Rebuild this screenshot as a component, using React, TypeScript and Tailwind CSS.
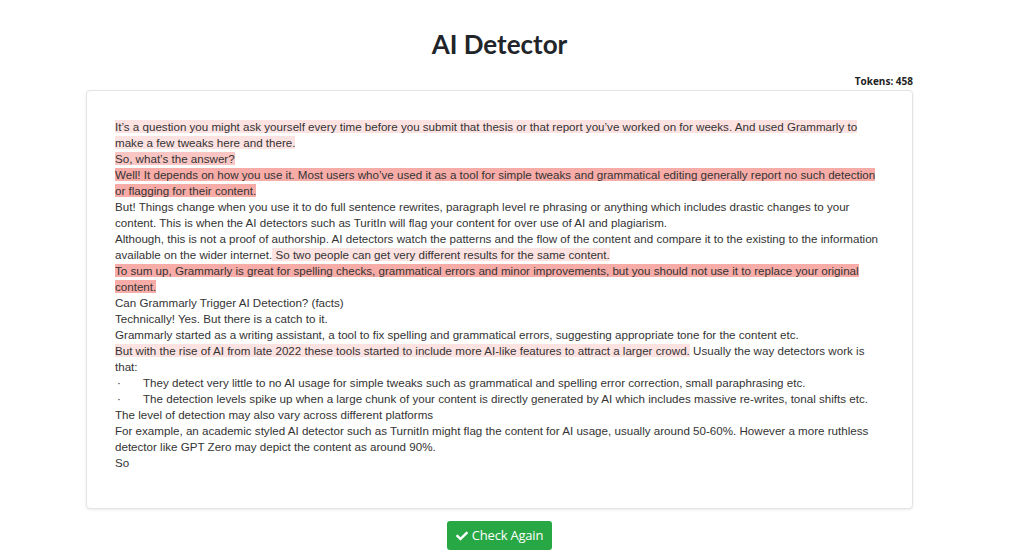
import { FaCheck } from "react-icons/fa";

type Seg = { text: string; tone?: "light" | "mid" | "strong" };

const toneClass = {
  light: "bg-[#fde2e2]",
  mid: "bg-[#fac6c4]",
  strong: "bg-[#f8aca8]",
};

const lines: Seg[][] = [
  [
    {
      text: "It’s a question you might ask yourself every time before you submit that thesis or that report you’ve worked on for weeks. And used Grammarly to make a few tweaks here ",
      tone: "light",
    },
    { text: "and there.", tone: "light" },
  ],
  [{ text: "So, what’s the answer?", tone: "mid" }],
  [
    {
      text: "Well! It depends on how you use it. Most users who’ve used it as a tool for simple tweaks and grammatical editing generally report no such detection or flagging for their content.",
      tone: "strong",
    },
  ],
  [
    {
      text: "But! Things change when you use it to do full sentence rewrites, paragraph level re phrasing or anything which includes drastic changes to your content. This is when the AI detectors such as TuritIn will flag your content for over use of AI and plagiarism.",
    },
  ],
  [
    {
      text: "Although, this is not a proof of authorship. AI detectors watch the patterns and the flow of the content and compare it to the existing to the information available on the wider internet.",
    },
    { text: " So two people can get very different results for the same content.", tone: "light" },
  ],
  [
    {
      text: "To sum up, Grammarly is great for spelling checks, grammatical errors and minor improvements, but you should not use it to replace your original content.",
      tone: "strong",
    },
  ],
  [{ text: "Can Grammarly Trigger AI Detection? (facts)" }],
  [{ text: "Technically! Yes. But there is a catch to it." }],
  [
    {
      text: "Grammarly started as a writing assistant, a tool to fix spelling and grammatical errors, suggesting appropriate tone for the content etc.",
    },
  ],
  [
    {
      text: "But with the rise of AI from late 2022 these tools started to include more AI-like features to attract a larger crowd.",
      tone: "light",
    },
    { text: " Usually the way detectors work is that:" },
  ],
];

const bullets = [
  "They detect very little to no AI usage for simple tweaks such as grammatical and spelling error correction, small paraphrasing etc.",
  "The detection levels spike up when a large chunk of your content is directly generated by AI which includes massive re-writes, tonal shifts etc.",
];

const tail = [
  "The level of detection may also vary across different platforms",
  "For example, an academic styled AI detector such as TurnitIn might flag the content for AI usage, usually around 50-60%. However a more ruthless detector like GPT Zero may depict the content as around 90%.",
  "So",
];

export default function App() {
  return (
    <div className="min-h-[560px] bg-white">
      <div className="w-[999px] flex flex-col items-center pt-[28px]">
        <h1 className="font-['Lato',sans-serif] font-bold text-[26px] leading-[32px] text-[#212529]">
          AI Detector
        </h1>

        <div className="w-[827px] mt-[14px] flex justify-end">
          <span className="font-['Open_Sans',sans-serif] font-bold text-[10px] leading-[14px] text-[#222]">
            Tokens: 458
          </span>
        </div>

        <div className="w-[827px] h-[419px] mt-[2px] border border-[#e4e4e4] rounded-[4px] bg-white shadow-[0_1px_3px_rgba(0,0,0,0.08)] pl-[28px] pr-[24px] pt-[28px]">
          <div className="font-['Liberation_Sans',Arial,sans-serif] text-[11.6px] leading-[16px] text-[#333]">
            {lines.map((segs, i) => (
              <div key={i}>
                {segs.map((s, j) => (
                  <span key={j} className={s.tone ? toneClass[s.tone] : ""}>
                    {s.text}
                  </span>
                ))}
              </div>
            ))}
            {bullets.map((b, i) => (
              <div key={i} className="flex">
                <span className="w-[28px] shrink-0 pl-[2px]">·</span>
                <span>{b}</span>
              </div>
            ))}
            {tail.map((t, i) => (
              <div key={i}>{t}</div>
            ))}
          </div>
        </div>

        <button className="mt-[12px] h-[29px] px-[9px] flex items-center gap-[4px] rounded-[3px] bg-[#28a745] text-white font-['Open_Sans',sans-serif] text-[13px] tracking-[-0.2px]">
          <FaCheck className="w-[12px] h-[12px]" />
          Check Again
        </button>
      </div>
    </div>
  );
}
